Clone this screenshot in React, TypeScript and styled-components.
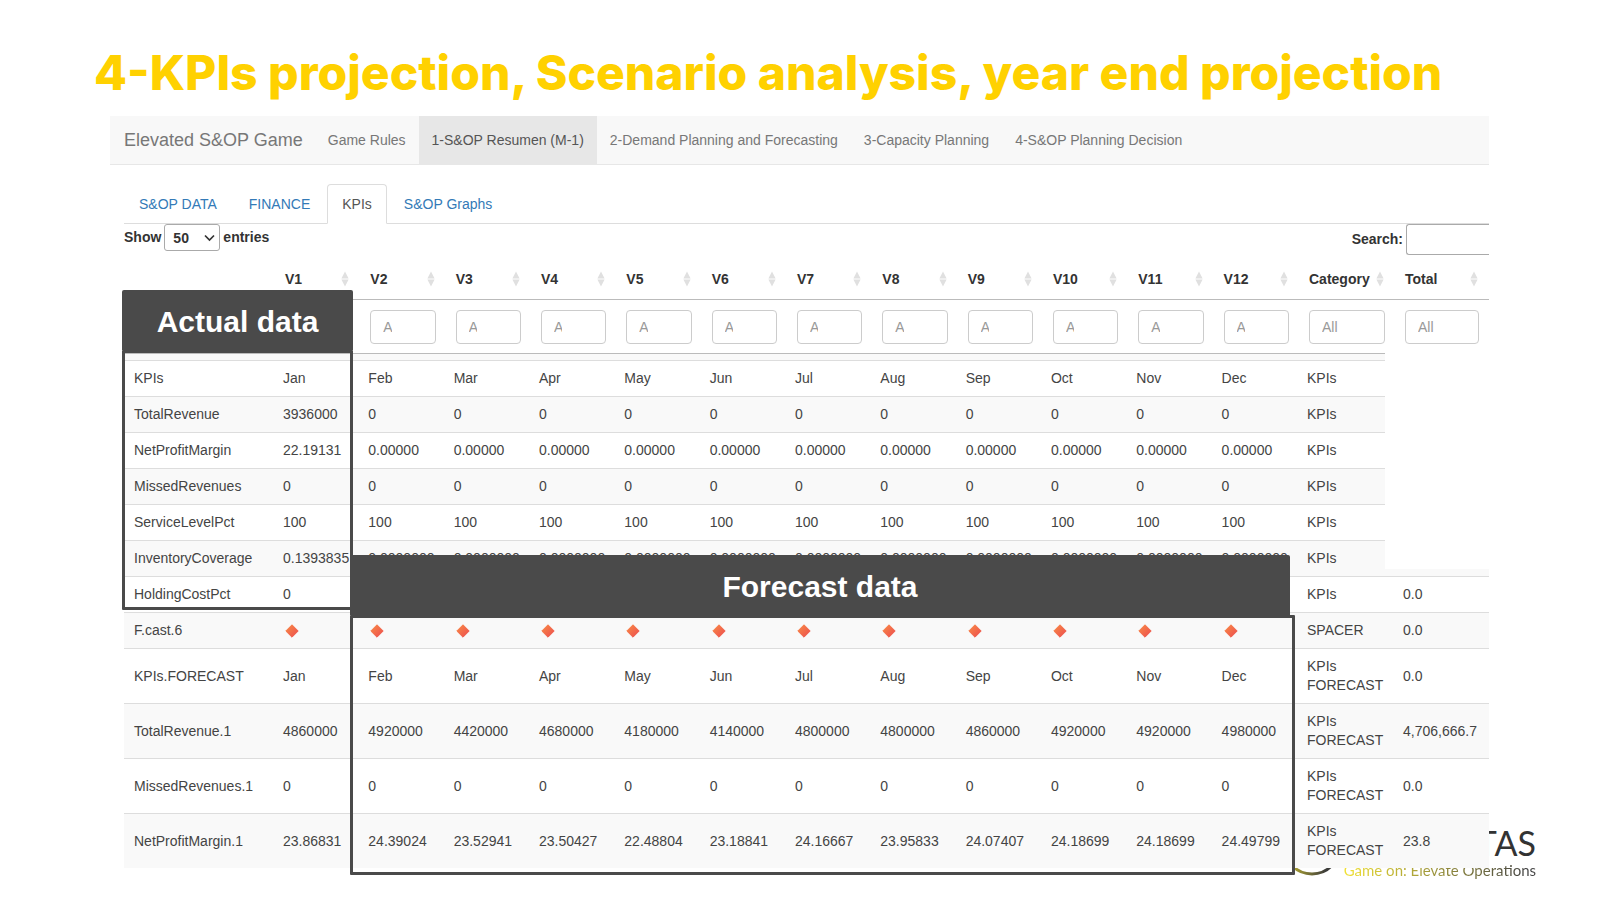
import React from "react";
import styled, { createGlobalStyle, css } from "styled-components";

const SANS = `"Liberation Sans", Arial, sans-serif`;
const INK = "#4a4a4a";

const GlobalStyle = createGlobalStyle`
  *, *::before, *::after { box-sizing: border-box; }
  body { margin: 0; background: #fff; color: #444; font: 14px/19px ${SANS}; }
`;

const Slide = styled.main`
  position: relative;
  min-height: 100vh;
  padding: 43px 111px 25px 110px;
  overflow: hidden;
`;

const Title = styled.h1`
  margin: 0 0 13px -16px;
  font: 800 48px/60px Inter, sans-serif;
  white-space: nowrap;
  color: #ffd100;
`;

const NavBar = styled.nav`
  display: flex;
  align-items: stretch;
  height: 49px;
  background: #f8f8f8;
  border-bottom: 1px solid #e7e7e7;
`;

const Brand = styled.a`
  display: flex;
  align-items: center;
  padding: 0 12px 0 14px;
  font-size: 18px;
  color: #777;
  text-decoration: none;
`;

const NavLink = styled.a<{ $active?: boolean }>`
  display: flex;
  align-items: center;
  padding: 0 13px;
  color: ${(p) => (p.$active ? "#555" : "#777")};
  background: ${(p) => (p.$active ? "#e7e7e7" : "transparent")};
  text-decoration: none;
`;

const Content = styled.div`
  padding: 19px 0 0 14px;
`;

const Tabs = styled.div`
  display: flex;
  height: 40px;
  border-bottom: 1px solid #ddd;
`;

const Tab = styled.a<{ $active?: boolean }>`
  display: flex;
  align-items: center;
  height: 40px;
  padding: 0 14px;
  margin-right: 2px;
  border: 1px solid transparent;
  border-radius: 4px 4px 0 0;
  color: #337ab7;
  text-decoration: none;
  ${(p) =>
    p.$active &&
    css`
      color: #555;
      background: #fff;
      border-color: #ddd #ddd #fff;
    `}
`;

const Controls = styled.div`
  display: flex;
  justify-content: space-between;
  height: 35px;
  font-weight: bold;
  color: #333;
`;

const LengthLabel = styled.label`
  display: flex;
  align-items: center;
  gap: 3px;
  height: 27px;
`;

const SelectBox = styled.span`
  position: relative;
  display: flex;
`;

const Select = styled.select`
  appearance: none;
  width: 56px;
  height: 27px;
  padding: 0 8px;
  border: 1px solid #aaa;
  border-radius: 3px;
  background: #fff;
  color: #333;
  font: bold 14px ${SANS};
`;

const Chevron = styled.svg`
  position: absolute;
  right: 5px;
  top: 10px;
  pointer-events: none;
`;

const SearchLabel = styled.label`
  display: flex;
  align-items: center;
  gap: 3px;
  height: 31px;
`;

const SearchInput = styled.input`
  width: 83px;
  height: 31px;
  border: 1px solid #aaa;
  border-right: 0;
  border-radius: 3px 0 0 3px;
  background: #fff;
`;

const TableArea = styled.div`
  position: relative;
`;

const Table = styled.table`
  width: 100%;
  table-layout: fixed;
  border-collapse: separate;
  border-spacing: 0;
`;

const Col = styled.col<{ $w?: number }>`
  width: ${(p) => (p.$w ? `${p.$w}px` : "auto")};
`;

const HeadCell = styled.th`
  height: 41px;
  padding: 0 10px;
  border-bottom: 1px solid #bbb;
  text-align: left;
  color: #333;
`;

const HeadInner = styled.div`
  display: flex;
  align-items: center;
  justify-content: space-between;
  height: 19px;
  margin-right: 1px;
`;

const SortMark = styled.svg`
  flex: none;
`;

const FilterCell = styled.td`
  height: 54px;
  padding: 0 10px;
  border-bottom: 1px solid #bbb;
`;

const FilterInput = styled.input`
  display: block;
  width: 100%;
  height: 34px;
  padding: 0 43px 0 12px;
  border: 1px solid #ccc;
  border-radius: 4px;
  background: #fff;
  font: 14px ${SANS};
  &::placeholder { color: #999; opacity: 1; }
`;

const StripCell = styled.td`
  height: 6px;
  padding: 0;
  background: #f9f9f9;
`;

const Row = styled.tr<{ $shade?: boolean }>`
  background: ${(p) => (p.$shade ? "#f9f9f9" : "#fff")};
`;

const Cell = styled.td`
  padding: 8px;
  border-top: 1px solid #ddd;
  vertical-align: middle;
  white-space: nowrap;
`;

const NameCell = styled(Cell)`
  padding-left: 10px;
`;

const WrapCell = styled(Cell)`
  white-space: normal;
`;

const Blank = styled.div`
  position: absolute;
  top: 94px;
  right: 0;
  width: 104px;
  height: 216px;
  background: #fff;
`;

const Callout = styled.div`
  position: absolute;
  display: flex;
  flex-direction: column;
`;

const ActualCallout = styled(Callout)`
  top: 31px;
  left: -2px;
  width: 231px;
  height: 320px;
`;

const ForecastCallout = styled(Callout)`
  top: 296px;
  left: 226px;
  right: 194px;
  height: 320px;
`;

const CalloutLabel = styled.div<{ $inset?: boolean }>`
  display: flex;
  align-items: center;
  justify-content: center;
  height: 60px;
  padding-top: 4px;
  margin-right: ${(p) => (p.$inset ? "5px" : "0")};
  border-radius: 2px 2px 0 0;
  background: ${INK};
  color: #fff;
  font: bold 30px/36px ${SANS};
`;

const CalloutFrame = styled.div`
  flex: 1;
  border: 3px solid ${INK};
  border-radius: 1px;
`;

const Logo = styled.div`
  position: absolute;
  right: 64px;
  bottom: 20px;
  display: flex;
  align-items: flex-end;
  gap: 2px;
  font-family: Lato, sans-serif;
`;

const LogoRing = styled.svg`
  margin-bottom: 4px;
`;

const LogoText = styled.div`
  text-align: right;
`;

const LogoName = styled.div`
  font-size: 34px;
  line-height: 34px;
  color: #333;
`;

const LogoTag = styled.div`
  font-size: 15px;
  line-height: 20px;
  background: linear-gradient(90deg, #f2e233, #444 95%);
  background-clip: text;
  color: transparent;
`;

const SortIcon = () => (
  <SortMark width="8" height="16" viewBox="0 0 8 16" aria-hidden="true">
    <path d="M4 .6 7.6 7.5H.4zM4 15.4.4 8.5h7.2z" fill="#e0e0e0" />
  </SortMark>
);

const DiamondMark = styled.svg`
  display: block;
`;

const Diamond = () => (
  <DiamondMark width="18" height="14" viewBox="0 0 18 14" aria-hidden="true">
    <defs>
      <linearGradient id="ember" x1="0" y1="0" x2="1" y2="1">
        <stop offset="0" stopColor="#f98b45" />
        <stop offset="1" stopColor="#ec4d50" />
      </linearGradient>
    </defs>
    <path d="M9 .8 15.2 7 9 13.2 2.8 7z" fill="url(#ember)" stroke="url(#ember)" strokeLinejoin="round" />
  </DiamondMark>
);

const months = ["Jan", "Feb", "Mar", "Apr", "May", "Jun", "Jul", "Aug", "Sep", "Oct", "Nov", "Dec"];
const fill = (first: string, rest: string): string[] => [first, ...Array(11).fill(rest)];

type Line = { name: string; values: string[] | null; category: string; total: string };

const lines: Line[] = [
  { name: "KPIs", values: months, category: "KPIs", total: "" },
  { name: "TotalRevenue", values: fill("3936000", "0"), category: "KPIs", total: "" },
  { name: "NetProfitMargin", values: fill("22.19131", "0.00000"), category: "KPIs", total: "" },
  { name: "MissedRevenues", values: fill("0", "0"), category: "KPIs", total: "" },
  { name: "ServiceLevelPct", values: fill("100", "100"), category: "KPIs", total: "" },
  { name: "InventoryCoverage", values: fill("0.1393835", "0.0000000"), category: "KPIs", total: "" },
  { name: "HoldingCostPct", values: fill("0", ""), category: "KPIs", total: "0.0" },
  { name: "F.cast.6", values: null, category: "SPACER", total: "0.0" },
  { name: "KPIs.FORECAST", values: months, category: "KPIs FORECAST", total: "0.0" },
  {
    name: "TotalRevenue.1",
    values: ["4860000", "4920000", "4420000", "4680000", "4180000", "4140000", "4800000", "4800000", "4860000", "4920000", "4920000", "4980000"],
    category: "KPIs FORECAST",
    total: "4,706,666.7",
  },
  { name: "MissedRevenues.1", values: fill("0", "0"), category: "KPIs FORECAST", total: "0.0" },
  {
    name: "NetProfitMargin.1",
    values: ["23.86831", "24.39024", "23.52941", "23.50427", "22.48804", "23.18841", "24.16667", "23.95833", "24.07407", "24.18699", "24.18699", "24.49799"],
    category: "KPIs FORECAST",
    total: "23.8",
  },
];

const heads = [...months.map((_, i) => `V${i + 1}`), "Category", "Total"];

export default function App() {
  return (
    <>
      <GlobalStyle />
      <Slide>
        <Logo>
          <LogoRing width="60" height="60" viewBox="0 0 60 60" aria-hidden="true">
            <defs>
              <linearGradient id="ring" x1="0" x2="1">
                <stop offset="0" stopColor="#c9bd2f" />
                <stop offset=".75" stopColor="#3c3c3a" />
              </linearGradient>
            </defs>
            <circle cx="30" cy="30" r="28" fill="none" stroke="url(#ring)" strokeWidth="3" />
          </LogoRing>
          <LogoText>
            <LogoName>TAS</LogoName>
            <LogoTag>Game on: Elevate Operations</LogoTag>
          </LogoText>
        </Logo>
        <Title>4-KPIs projection, Scenario analysis, year end projection</Title>
        <NavBar>
          <Brand href="#">Elevated S&amp;OP Game</Brand>
          <NavLink href="#">Game Rules</NavLink>
          <NavLink href="#" $active>1-S&amp;OP Resumen (M-1)</NavLink>
          <NavLink href="#">2-Demand Planning and Forecasting</NavLink>
          <NavLink href="#">3-Capacity Planning</NavLink>
          <NavLink href="#">4-S&amp;OP Planning Decision</NavLink>
        </NavBar>
        <Content>
          <Tabs>
            <Tab href="#">S&amp;OP DATA</Tab>
            <Tab href="#">FINANCE</Tab>
            <Tab href="#" $active>KPIs</Tab>
            <Tab href="#">S&amp;OP Graphs</Tab>
          </Tabs>
          <Controls>
            <LengthLabel>
              Show
              <SelectBox>
                <Select defaultValue="50">
                  <option>10</option>
                  <option>25</option>
                  <option>50</option>
                </Select>
                <Chevron width="11" height="8" viewBox="0 0 11 8" aria-hidden="true">
                  <path d="M1 1.5 5.5 6 10 1.5" fill="none" stroke="#333" strokeWidth="1.7" />
                </Chevron>
              </SelectBox>
              entries
            </LengthLabel>
            <SearchLabel>
              Search:
              <SearchInput type="search" />
            </SearchLabel>
          </Controls>
          <TableArea>
            <Table>
              <colgroup>
                <Col $w={151} />
                {months.map((m) => <Col key={m} />)}
                <Col $w={96} />
                <Col $w={94} />
              </colgroup>
              <thead>
                <tr>
                  <HeadCell />
                  {heads.map((h) => (
                    <HeadCell key={h} scope="col">
                      <HeadInner>{h}<SortIcon /></HeadInner>
                    </HeadCell>
                  ))}
                </tr>
                <tr>
                  <FilterCell />
                  {heads.map((h) => (
                    <FilterCell key={h}>
                      <FilterInput placeholder="All" aria-label={`Filter ${h}`} />
                    </FilterCell>
                  ))}
                </tr>
              </thead>
              <tbody>
                <tr><StripCell colSpan={15} /></tr>
                {lines.map((l, i) => (
                  <Row key={l.name} $shade={i % 2 === 1}>
                    <NameCell>{l.name}</NameCell>
                    {months.map((m, k) => (
                      <Cell key={m}>{l.values ? l.values[k] : <Diamond />}</Cell>
                    ))}
                    <WrapCell>{l.category}</WrapCell>
                    <Cell>{l.total}</Cell>
                  </Row>
                ))}
              </tbody>
            </Table>
            <Blank />
            <ActualCallout>
              <CalloutLabel>Actual data</CalloutLabel>
              <CalloutFrame />
            </ActualCallout>
            <ForecastCallout>
              <CalloutLabel $inset>Forecast data</CalloutLabel>
              <CalloutFrame />
            </ForecastCallout>
          </TableArea>
        </Content>
      </Slide>
    </>
  );
}
